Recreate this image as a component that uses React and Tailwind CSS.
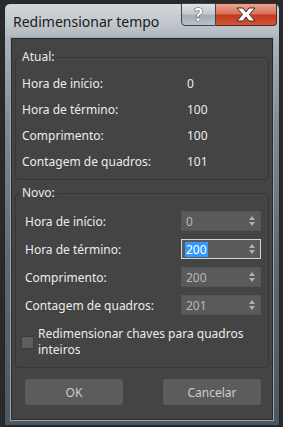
import React from "react";

const font = "font-['Noto_Sans',sans-serif]";

function Spinner({ value, focused }) {
  return (
    <div
      className={`flex h-[20px] w-[80px] items-center justify-between bg-[#5a5a5a] pl-[3px] pr-[5px] ${
        focused ? "border border-[#d4d4d4]" : "border border-[#555]"
      }`}
    >
      {focused ? (
        <span className="bg-[#3399ff] px-[1px] text-[12px] leading-[15px] text-white">{value}</span>
      ) : (
        <span className="px-[1px] text-[12px] leading-[15px] text-[#b8b8b8]">{value}</span>
      )}
      <svg width="6" height="10" viewBox="0 0 6 10">
        <path d="M3 0 L6 4 L0 4 Z" fill="#b0b0b0" />
        <path d="M0 6 L6 6 L3 10 Z" fill="#b0b0b0" />
      </svg>
    </div>
  );
}

export default function App() {
  const atual = [
    ["Hora de início:", "0"],
    ["Hora de término:", "100"],
    ["Comprimento:", "100"],
    ["Contagem de quadros:", "101"],
  ];
  const novo = [
    ["Hora de início:", "0", false],
    ["Hora de término:", "200", true],
    ["Comprimento:", "200", false],
    ["Contagem de quadros:", "201", false],
  ];

  return (
    <div className={`h-[427px] w-[283px] overflow-hidden bg-[#2a2a2a] pt-[3px] pl-[4px] ${font}`}>
      <div className="flex h-[423px] w-[276px] flex-col rounded-t-[6px] border border-[#20272e] bg-[linear-gradient(180deg,#d3d7da_0px,#c0c6cb_20px,#a9b1b8_40px,#7f8b96_120px,#5d6a76_260px,#4b5864_100%)] px-[5px] pb-[4px]">
        {/* title bar */}
        <div className="flex h-[33px] shrink-0 items-start">
          <span className="mt-[9px] ml-[3px] text-[14px] leading-[18px] text-[#1b1b1b]">Redimensionar tempo</span>
          <div className="-mt-[1px] -mr-[3px] ml-auto flex">
            <div className="flex h-[23px] w-[35px] items-center justify-center rounded-bl-[4px] border border-[#3b444c] bg-[linear-gradient(180deg,#dfe3e6_0%,#c3c9ce_45%,#a5adb4_55%,#b9c0c6_100%)]">
              <span className="text-[17px] font-bold leading-[18px] text-white [-webkit-text-stroke:1px_#3a3f45] [paint-order:stroke_fill]">?</span>
            </div>
            <div className="flex h-[23px] w-[61px] items-center justify-center rounded-br-[4px] border border-l-0 border-[#4a2a22] bg-[linear-gradient(180deg,#e8a592_0%,#d9725a_45%,#c43a1e_55%,#d0563a_100%)]">
              <svg width="22" height="15" viewBox="0 0 22 15">
                <path
                  d="M2 1 H8 L11 5 L14 1 H20 L14.5 7.5 L20 14 H14 L11 10 L8 14 H2 L7.5 7.5 Z"
                  fill="#ffffff"
                  stroke="#3a2a26"
                  strokeWidth="1"
                  strokeLinejoin="round"
                />
              </svg>
            </div>
          </div>
        </div>

        {/* client area */}
        <div className="flex flex-1 flex-col border border-[#9ba5ae] bg-[#444444] text-[12px] leading-[15px] text-[#ececec] shadow-[inset_0_0_0_1px_#2a2a2a]">
          <fieldset className="mx-[4px] mt-[12px] rounded-[4px] border border-[#363636] pb-[5px]">
            <legend className="ml-[4px] px-[2px] leading-[14px]">Atual:</legend>
            <div className="pt-[6px] pl-[6px]">
              {atual.map(([label, value]) => (
                <div key={label} className="flex h-[26px] items-center">
                  <span className="w-[165px]">{label}</span>
                  <span>{value}</span>
                </div>
              ))}
            </div>
          </fieldset>

          <fieldset className="mx-[4px] mt-[6px] rounded-[4px] border border-[#363636] pb-[9px]">
            <legend className="ml-[4px] px-[2px] leading-[14px]">Novo:</legend>
            <div className="pt-[7px] pl-[9px]">
              {novo.map(([label, value, focused]) => (
                <div key={label} className="flex h-[28px] items-center">
                  <span className="w-[156px]">{label}</span>
                  <Spinner value={value} focused={focused} />
                </div>
              ))}
            </div>
            <div className="mt-[7px] flex items-center gap-[4px] pl-[5px]">
              <div className="h-[13px] w-[13px] shrink-0 border border-[#3c3c3c] bg-[#5e5e5e]" />
              <span className="leading-[16px]">
                Redimensionar chaves para quadros
                <br />
                inteiros
              </span>
            </div>
          </fieldset>

          <div className="mt-[11px] flex gap-[40px] pl-[14px]">
            <button className="h-[26px] w-[98px] rounded-[3px] bg-[#5c5c5c] text-[12px] text-[#cdcdcd]">OK</button>
            <button className="h-[26px] w-[98px] rounded-[3px] bg-[#5c5c5c] text-[12px] text-[#cdcdcd]">Cancelar</button>
          </div>
        </div>
      </div>
    </div>
  );
}
